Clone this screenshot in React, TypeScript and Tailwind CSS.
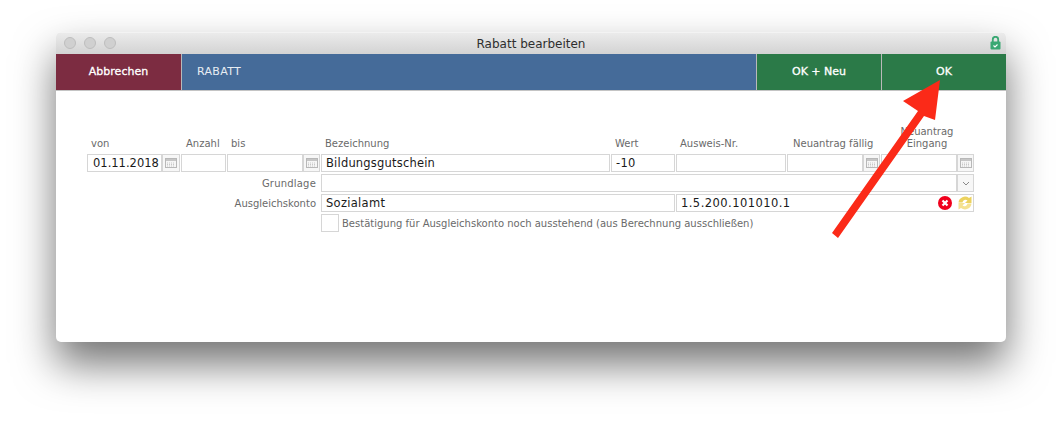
const font = "font-['DejaVu_Sans',sans-serif]";

const Calendar = () => (
  <svg width="12" height="10" viewBox="0 0 12 10" className="block">
    <rect x="0.5" y="0.5" width="11" height="9" fill="#f6f6f6" stroke="#b8b8b8" />
    <rect x="1" y="1" width="10" height="2" fill="#c6c6c6" />
    {[2, 4, 6, 8].map((x) =>
      [4.5, 6, 7.5].map((y) => <rect key={`${x}-${y}`} x={x} y={y} width="1" height="1" fill="#c8c8c8" />)
    )}
  </svg>
);

const Field = ({ w, value, right, track = "tracking-[0.3px]" }: { w: string; value?: string; right?: React.ReactNode; track?: string }) => (
  <div className={`${w} h-[18px] shrink-0 flex items-center justify-between border border-[#d6d6d6] bg-white pl-[4px] pr-[1px] text-[11.5px] text-[#1a1a1a]`}>
    <span className={`${track} pt-[2px] whitespace-nowrap`}>{value}</span>
    {right}
  </div>
);

const IconBox = ({ w = "w-[17px]", children }: { w?: string; children: React.ReactNode }) => (
  <div className={`${w} h-[18px] shrink-0 flex items-center justify-center border border-[#d6d6d6] bg-[#f7f7f7]`}>
    {children}
  </div>
);

const Label = ({ w, text }: { w: string; text: string }) => (
  <div className={`${w} shrink-0 text-[10px] leading-[12px] text-[#6a6a6a] whitespace-nowrap`}>{text}</div>
);

export default function App() {
  return (
    <div className={`relative w-[1062px] h-[422px] overflow-hidden bg-white pl-[56px] pt-[32px] ${font}`}>
      <div className="w-[950px] h-[310px] rounded-[5px] bg-white overflow-hidden shadow-[0_22px_42px_rgba(0,0,0,0.55)]">
        <div className="relative h-[22px] flex items-center justify-center bg-gradient-to-b from-[#ebebeb] to-[#d3d3d3] border-t border-[#f3f3f3]">
          <div className="absolute left-[8px] top-[4px] flex gap-[8px]">
            <div className="w-[12px] h-[12px] rounded-full bg-[#d0d0d0] border border-[#bdbdbd]" />
            <div className="w-[12px] h-[12px] rounded-full bg-[#d0d0d0] border border-[#bdbdbd]" />
            <div className="w-[12px] h-[12px] rounded-full bg-[#d0d0d0] border border-[#bdbdbd]" />
          </div>
          <span className="text-[12px] text-[#2e2e2e]">Rabatt bearbeiten</span>
          <svg width="11" height="14" viewBox="0 0 11 14" className="absolute right-[5px] top-[3px]">
            <path d="M2.8 6V3.500a2.700 2.700 0 0 1 5.400 0V6" fill="none" stroke="#3aa873" strokeWidth="1.800" />
            <rect x="0.500" y="5.500" width="10" height="8" rx="1" fill="#3aa873" />
            <path d="M3.500 9.500l1.500 1.500L7.500 8.500" fill="none" stroke="#fff" strokeWidth="1.100" />
          </svg>
        </div>

        <div className="h-[37px] flex border-b border-[#c4c4c4] text-[11px] text-white [-webkit-text-stroke:0.3px_white]">
          <div className="w-[126px] flex items-center justify-center bg-[#7c2c41] border-r border-[#b9b9b9]">Abbrechen</div>
          <div className="w-[575px] flex items-center pl-[15px] bg-[#456b99] border-r border-[#b9b9b9] text-[#e8edf3] tracking-[0.3px] [-webkit-text-stroke:0px]">RABATT</div>
          <div className="w-[125px] flex items-center justify-center bg-[#2b7a48] border-r border-[#b9b9b9]">OK + Neu</div>
          <div className="flex-1 flex items-center justify-center bg-[#2b7a48]">OK</div>
        </div>

        <div className="pl-[31px] pt-[36px]">
          <div className="flex items-end h-[26px] mb-[1px] pb-[3px]">
            <Label w="w-[99px] pl-[4px]" text="von" />
            <Label w="w-[45px]" text="Anzahl" />
            <Label w="w-[94px]" text="bis" />
            <Label w="w-[290px]" text="Bezeichnung" />
            <Label w="w-[65px]" text="Wert" />
            <Label w="w-[113px]" text="Ausweis-Nr." />
            <Label w="w-[104px]" text="Neuantrag fällig" />
            <div className="text-[10px] leading-[12px] text-[#6a6a6a] text-center w-[60px]">
              Neuantrag
              <br />
              Eingang
            </div>
          </div>

          <div className="flex gap-[1px]">
            <div className="flex">
              <Field w="w-[75px]" value="01.11.2018" track="ml-[1px]" />
              <IconBox w="w-[18px]"><Calendar /></IconBox>
            </div>
            <Field w="w-[45px]" />
            <div className="flex">
              <Field w="w-[76px]" />
              <IconBox><Calendar /></IconBox>
            </div>
            <Field w="w-[289px]" value="Bildungsgutschein" track="tracking-[0.2px]" />
            <Field w="w-[64px]" value="-10" />
            <Field w="w-[110px]" />
            <div className="flex">
              <Field w="w-[76px]" />
              <IconBox><Calendar /></IconBox>
            </div>
            <div className="flex">
              <Field w="w-[76px]" />
              <IconBox><Calendar /></IconBox>
            </div>
          </div>

          <div className="flex items-center mt-[2px]">
            <div className="w-[234px] shrink-0 pr-[5px] text-right text-[10px] text-[#6a6a6a] tracking-[0.2px]">Grundlage</div>
            <Field w="w-[636px]" />
            <IconBox>
              <svg width="8" height="5" viewBox="0 0 8 5">
                <path d="M1 1l3 3 3-3" fill="none" stroke="#8a8a8a" />
              </svg>
            </IconBox>
          </div>

          <div className="flex items-center mt-[2px]">
            <div className="w-[234px] shrink-0 pr-[5px] text-right text-[10px] text-[#6a6a6a]">Ausgleichskonto</div>
            <Field w="w-[354px]" value="Sozialamt" />
            <div className="w-[1px]" />
            <Field
              w="w-[298px]"
              value="1.5.200.101010.1"
              track="tracking-[0.45px]"
              right={
                <div className="flex items-center gap-[6px]">
                  <svg width="14" height="14" viewBox="0 0 14 14">
                    <circle cx="7" cy="7" r="7" fill="#f0001c" />
                    <path d="M4.500 4.500l5 5M9.500 4.500l-5 5" stroke="#fff" strokeWidth="2.200" />
                  </svg>
                  <svg width="14" height="14" viewBox="0 0 14 14">
                    <path d="M0.500 6.500A6.500 6.500 0 0 1 11 2L13.500 0.500v6.500H7L9.500 4.500A3 3 0 0 0 4.500 6.500z" fill="#ecd25e" />
                    <path d="M13.500 7.500A6.500 6.500 0 0 1 3 12L0.500 13.500V7H7L4.500 9.500A3 3 0 0 0 9.500 7.500z" fill="#f5e291" />
                  </svg>
                </div>
              }
            />
          </div>

          <div className="flex items-center mt-[2px]">
            <div className="w-[234px] shrink-0" />
            <div className="w-[18px] h-[18px] shrink-0 border border-[#d6d6d6] bg-white" />
            <div className="ml-[3px] text-[10px] text-[#6a6a6a] whitespace-nowrap">
              Bestätigung für Ausgleichskonto noch ausstehend (aus Berechnung ausschließen)
            </div>
          </div>
        </div>
      </div>

      <svg width="1062" height="422" viewBox="0 0 1062 422" className="absolute left-0 top-0 pointer-events-none">
        <polygon points="940,80 903,101 918,111 832,233 838,238 924,116 935,120" fill="#fb2a18" />
      </svg>
    </div>
  );
}
